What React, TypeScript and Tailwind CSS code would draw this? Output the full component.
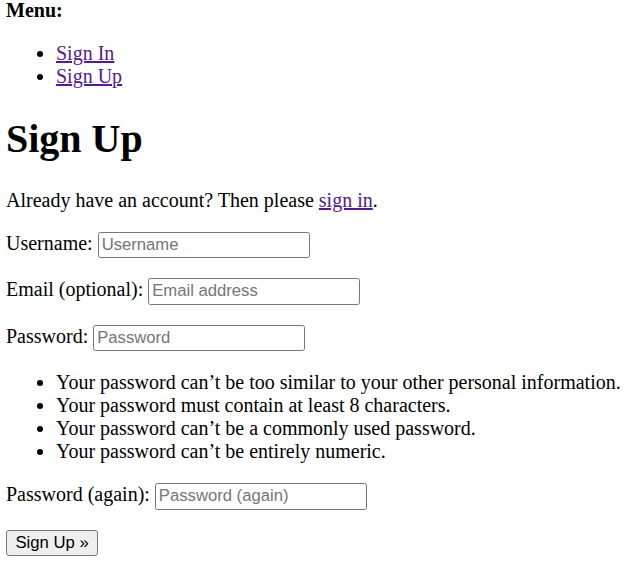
const inputCls =
  "inline-block h-[26.5px] w-[212px] rounded-[2.5px] border border-[#767676] bg-white px-[3px] py-[1px] align-baseline font-['Liberation_Sans',Arial,sans-serif] text-[16.67px] leading-[normal] text-black placeholder:text-[#757575]";

const linkCls = "text-[#551a8b] underline";

const helpText = [
  "Your password can’t be too similar to your other personal information.",
  "Your password must contain at least 8 characters.",
  "Your password can’t be a commonly used password.",
  "Your password can’t be entirely numeric.",
];

export default function App() {
  return (
    <div className="-mt-px bg-white px-[6px] font-['Liberation_Serif','Times_New_Roman',serif] text-[20px] leading-[normal] text-black">
      {/* menu */}
      <div>
        <strong className="font-bold">Menu:</strong>
        <ul className="my-[20px] list-disc pl-[50px]">
          <li>
            <a href="#" className={linkCls}>Sign In</a>
          </li>
          <li>
            <a href="#" className={linkCls}>Sign Up</a>
          </li>
        </ul>
      </div>

      <h1 className="my-[26.8px] text-[40px] font-bold leading-[normal]">Sign Up</h1>

      <p className="my-[20px]">
        Already have an account? Then please <a href="#" className={linkCls}>sign in</a>.
      </p>

      <form onSubmit={(e) => e.preventDefault()}>
        <p className="my-[20px]">
          <label htmlFor="id_username">Username:</label>{" "}
          <input id="id_username" type="text" placeholder="Username" className={inputCls} />
        </p>
        <p className="my-[20px]">
          <label htmlFor="id_email">Email (optional):</label>{" "}
          <input id="id_email" type="email" placeholder="Email address" className={inputCls} />
        </p>
        <p className="my-[20px]">
          <label htmlFor="id_password1">Password:</label>{" "}
          <input id="id_password1" type="password" placeholder="Password" className={inputCls} />
        </p>
        <ul className="my-[20px] list-disc pl-[50px]">
          {helpText.map((t) => (
            <li key={t}>{t}</li>
          ))}
        </ul>
        <p className="my-[20px]">
          <label htmlFor="id_password2">Password (again):</label>{" "}
          <input id="id_password2" type="password" placeholder="Password (again)" className={inputCls} />
        </p>
        <button
          type="submit"
          className="h-[26.5px] rounded-[3px] border border-[#767676] bg-[#efefef] px-[8.5px] font-['Liberation_Sans',Arial,sans-serif] text-[16.67px] leading-[normal] text-black"
        >
          Sign Up »
        </button>
      </form>
    </div>
  );
}
